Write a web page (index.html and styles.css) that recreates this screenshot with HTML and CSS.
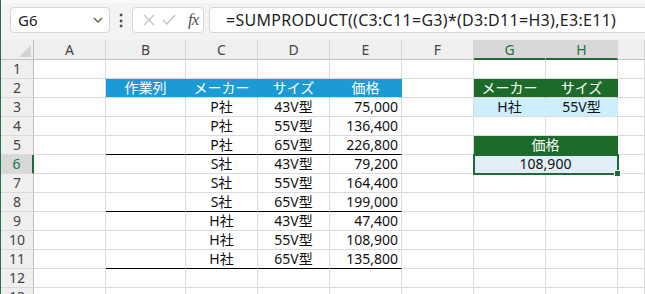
FILE: index.html
```html
<!DOCTYPE html>
<html lang="ja">
<head>
    <meta charset="UTF-8">
    <title>SUMPRODUCT</title>
    <link rel="stylesheet" href="styles.css">
</head>
<body>
    <div class="app">
        <div class="fbar">
            <div class="namebox">
                <span>G6</span>
                <svg class="chev" width="10" height="6" viewBox="0 0 10 6"><polyline points="1,1 5,5 9,1" fill="none" stroke="#5e5e2a" stroke-width="1.3"/></svg>
            </div>
            <div class="dots">⋮</div>
            <div class="fxbox">
                <svg width="12" height="12" viewBox="0 0 12 12"><path d="M1 1 L11 11 M11 1 L1 11" stroke="#c4c4c4" stroke-width="1.3"/></svg>
                <svg width="14" height="12" viewBox="0 0 14 12"><polyline points="1,6 5,10 13,1" fill="none" stroke="#c4c4c4" stroke-width="1.3"/></svg>
                <span class="fx">fx</span>
            </div>
            <div class="formula">=SUMPRODUCT((C3:C11=G3)*(D3:D11=H3),E3:E11)</div>
        </div>

        <div class="sheet">
            <!-- column headers -->
            <div class="corner"><span class="tri"></span></div>
            <div class="ch">A</div><div class="ch">B</div><div class="ch">C</div><div class="ch">D</div>
            <div class="ch">E</div><div class="ch">F</div><div class="ch sel">G</div><div class="ch sel">H</div><div class="ch"></div>

            <!-- 1 -->
            <div class="rh">1</div>
            <div class="c"></div><div class="c"></div><div class="c"></div><div class="c"></div>
            <div class="c"></div><div class="c"></div><div class="c"></div><div class="c"></div><div class="c"></div>

            <!-- 2 -->
            <div class="rh">2</div>
            <div class="c"></div>
            <div class="c blue">作業列</div><div class="c blue">メーカー</div><div class="c blue">サイズ</div><div class="c blue">価格</div>
            <div class="c"></div>
            <div class="c green">メーカー</div><div class="c green">サイズ</div>
            <div class="c"></div>

            <!-- 3 -->
            <div class="rh">3</div>
            <div class="c"></div><div class="c"></div>
            <div class="c ctr">P社</div><div class="c ctr">43V型</div><div class="c num">75,000</div>
            <div class="c"></div>
            <div class="c ctr pick">H社</div><div class="c ctr pick">55V型</div>
            <div class="c"></div>

            <!-- 4 -->
            <div class="rh">4</div>
            <div class="c"></div><div class="c"></div>
            <div class="c ctr">P社</div><div class="c ctr">55V型</div><div class="c num">136,400</div>
            <div class="c"></div><div class="c"></div><div class="c"></div><div class="c"></div>

            <!-- 5 -->
            <div class="rh">5</div>
            <div class="c"></div><div class="c sep"></div>
            <div class="c ctr sep">P社</div><div class="c ctr sep">65V型</div><div class="c num sep">226,800</div>
            <div class="c"></div>
            <div class="c green span2">価格</div>
            <div class="c"></div>

            <!-- 6 -->
            <div class="rh sel">6</div>
            <div class="c"></div><div class="c"></div>
            <div class="c ctr">S社</div><div class="c ctr">43V型</div><div class="c num">79,200</div>
            <div class="c"></div>
            <div class="c ctr span2 result">108,900</div>
            <div class="c"></div>

            <!-- 7 -->
            <div class="rh">7</div>
            <div class="c"></div><div class="c"></div>
            <div class="c ctr">S社</div><div class="c ctr">55V型</div><div class="c num">164,400</div>
            <div class="c"></div><div class="c"></div><div class="c"></div><div class="c"></div>

            <!-- 8 -->
            <div class="rh">8</div>
            <div class="c"></div><div class="c sep"></div>
            <div class="c ctr sep">S社</div><div class="c ctr sep">65V型</div><div class="c num sep">199,000</div>
            <div class="c"></div><div class="c"></div><div class="c"></div><div class="c"></div>

            <!-- 9 -->
            <div class="rh">9</div>
            <div class="c"></div><div class="c"></div>
            <div class="c ctr">H社</div><div class="c ctr">43V型</div><div class="c num">47,400</div>
            <div class="c"></div><div class="c"></div><div class="c"></div><div class="c"></div>

            <!-- 10 -->
            <div class="rh">10</div>
            <div class="c"></div><div class="c"></div>
            <div class="c ctr">H社</div><div class="c ctr">55V型</div><div class="c num">108,900</div>
            <div class="c"></div><div class="c"></div><div class="c"></div><div class="c"></div>

            <!-- 11 -->
            <div class="rh">11</div>
            <div class="c"></div><div class="c sep"></div>
            <div class="c ctr sep">H社</div><div class="c ctr sep">65V型</div><div class="c num sep">135,800</div>
            <div class="c"></div><div class="c"></div><div class="c"></div><div class="c"></div>

            <!-- 12 -->
            <div class="rh">12</div>
            <div class="c"></div><div class="c"></div><div class="c"></div><div class="c"></div>
            <div class="c"></div><div class="c"></div><div class="c"></div><div class="c"></div><div class="c"></div>

            <!-- 13 -->
            <div class="rh">13</div>
            <div class="c"></div><div class="c"></div><div class="c"></div><div class="c"></div>
            <div class="c"></div><div class="c"></div><div class="c"></div><div class="c"></div><div class="c"></div>
        </div>
    </div>
</body>
</html>
```

FILE: styles.css
```css
body {
    margin: 0;
    background: #ffffff;
    overflow: hidden;
    font-family: "Noto Sans", "Noto Sans CJK JP", sans-serif;
    color: #111;
}

.app {
    height: 294px;
    border-left: 1px solid #217346;
    overflow: hidden;
}

/* formula bar */
.fbar {
    height: 40px;
    box-sizing: border-box;
    display: flex;
    align-items: flex-start;
    padding: 7px 0 0 9px;
    background: #f3f3f3;
    border-top: 3px solid #f9f9f9;
    padding-top: 4px;
}

.namebox,
.fxbox,
.formula {
    height: 26px;
    box-sizing: border-box;
    background: #fff;
    border: 1px solid #d6d6d6;
    border-radius: 4px;
    display: flex;
    align-items: center;
}

.namebox {
    width: 100px;
    justify-content: space-between;
    padding: 0 6px 0 7px;
    font-size: 15px;
    color: #222;
}

.dots {
    width: 22px;
    text-align: center;
    font-size: 16px;
    line-height: 26px;
    font-weight: bold;
    color: #444;
}

.fxbox {
    width: 72px;
    padding: 0 4px 0 10px;
    gap: 7px;
}

.fx {
    margin-left: 5px;
    font-family: "Liberation Serif", serif;
    font-style: italic;
    font-size: 17px;
    color: #555;
    letter-spacing: -1px;
}

.formula {
    flex: 1;
    margin-left: 5px;
    padding-left: 16px;
    border-right: none;
    border-radius: 4px 0 0 4px;
    font-size: 16px;
    letter-spacing: 0.3px;
    color: #222;
    white-space: nowrap;
}

/* sheet */
.sheet {
    display: grid;
    grid-template-columns: 33px 72px 80px 72px 72px 72px 72px 72px 72px 1fr;
    grid-template-rows: 20px repeat(13, 19px);
    font-size: 14px;
}

.sheet > div {
    box-sizing: border-box;
    border-right: 1px solid #dadada;
    border-bottom: 1px solid #dadada;
    line-height: 18px;
    white-space: nowrap;
}

.corner {
    position: relative;
    background: #efefef;
    border-right-color: #bdbdbd !important;
    border-bottom-color: #c3c3c3 !important;
}

.tri {
    position: absolute;
    right: 2px;
    bottom: 2px;
    width: 0;
    height: 0;
    border-left: 12px solid transparent;
    border-bottom: 12px solid #d4d4d4;
}

.ch {
    background: #efefef;
    text-align: center;
    color: #444;
    border-right-color: #d6d6d6 !important;
    border-bottom-color: #c3c3c3 !important;
    line-height: 19px !important;
}

.ch.sel {
    background: #d8d8d8;
    color: #217346;
    border-bottom: 2px solid #1e6b38 !important;
}

.rh {
    background: #efefef;
    text-align: center;
    color: #444;
    border-right-color: #bdbdbd !important;
}

.rh.sel {
    background: #d8d8d8;
    color: #217346;
    border-right: 2px solid #1e6b38 !important;
}

.ctr {
    text-align: center;
}

.num {
    text-align: right;
    padding-right: 3px;
}

.sep {
    border-bottom-color: #000 !important;
}

.blue {
    background: #1b9ad6;
    border-right-color: #1b9ad6 !important;
    color: #fff;
    text-align: center;
}

.green {
    background: #1d6b2a;
    border-right-color: #1d6b2a !important;
    color: #fff;
    text-align: center;
}

.pick {
    background: #cdeefc;
    border-right-color: #cdeefc !important;
}

.span2 {
    grid-column: span 2;
}

.result {
    position: relative;
    z-index: 1;
    background: #dfeef7;
    outline: 2px solid #1e6b38;
    outline-offset: -1px;
}

.result::after {
    content: "";
    position: absolute;
    right: -4px;
    bottom: -4px;
    width: 5px;
    height: 5px;
    background: #1e6b38;
    border: 1px solid #fff;
}
```
